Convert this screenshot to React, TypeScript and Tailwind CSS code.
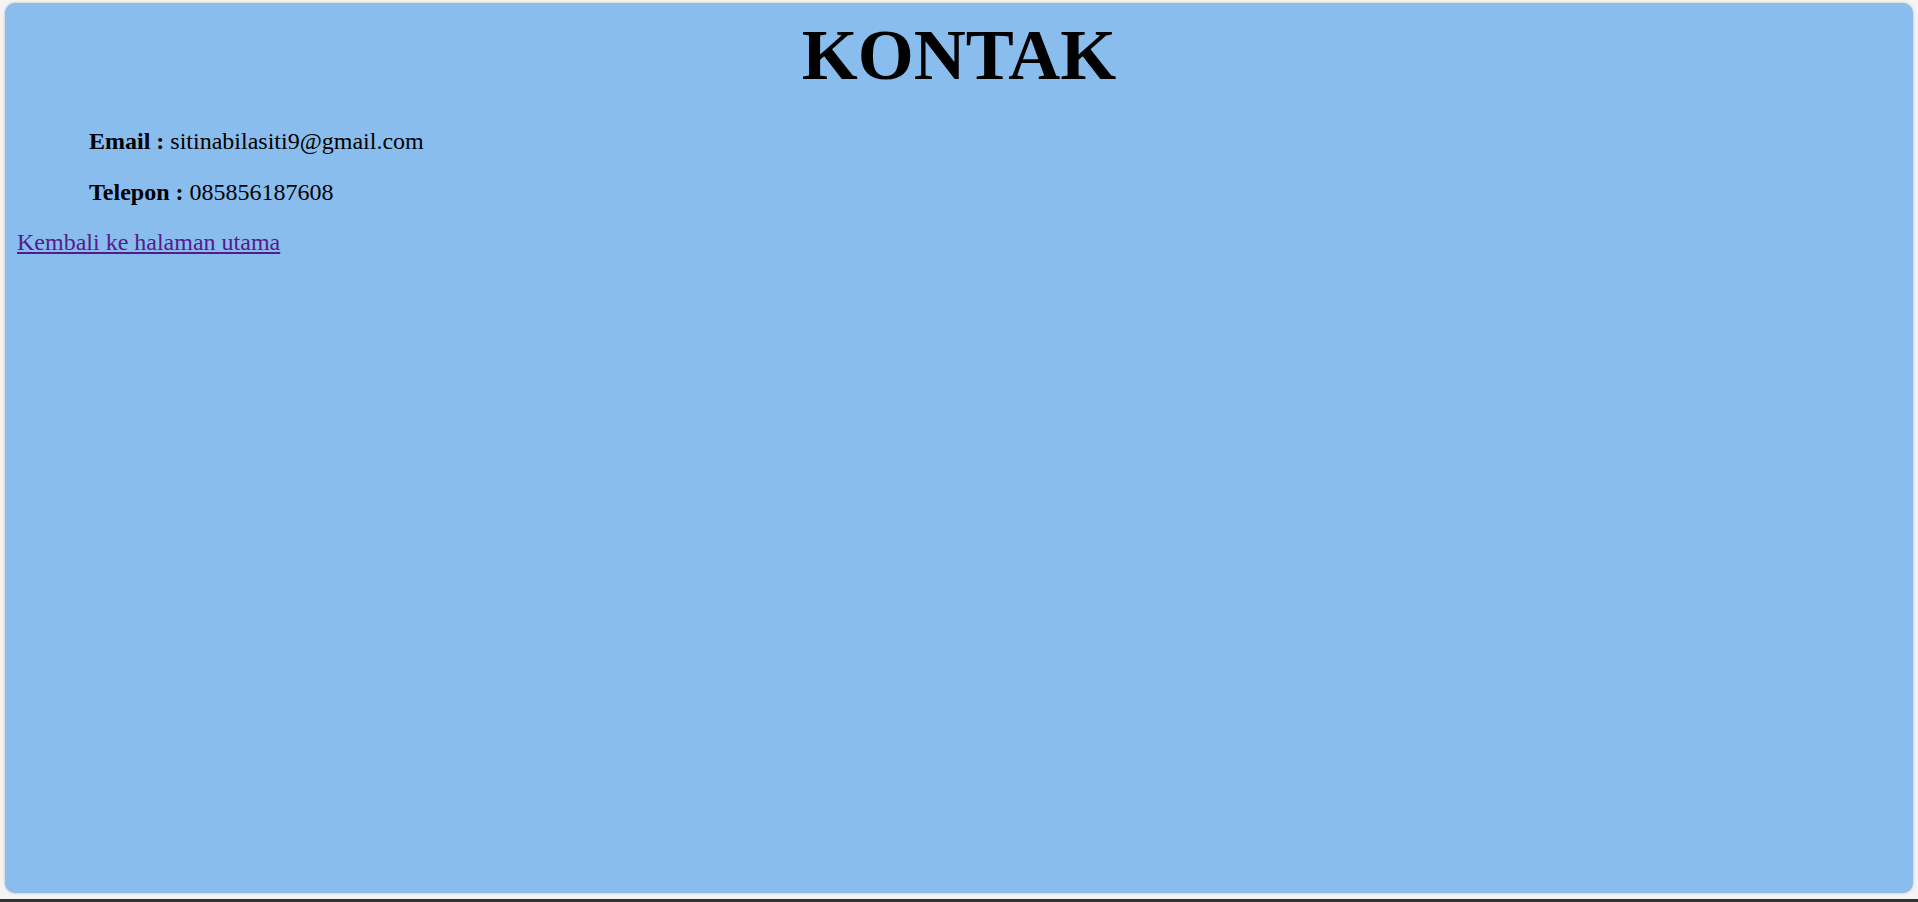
import React from "react";

export default function App() {
  return (
    <div className="h-[902px] w-full flex flex-col bg-[#f4f4f4] font-['Liberation_Serif',serif] text-black">
      <div className="flex-1 px-[5px] pt-[3px] pb-[6px] flex">
        {/* kartu kontak */}
        <div className="flex-1 rounded-[10px] bg-[#88bdee] p-[12px] shadow-[0_0_3px_rgba(0,0,0,0.25)]">
          <h1 className="text-center font-bold text-[72px] leading-[80px]">KONTAK</h1>

          <div className="pl-[72px] mt-[34px] text-[24px] leading-[24px]">
            <p>
              <b>Email :</b> sitinabilasiti9@gmail.com
            </p>
            <p className="mt-[27px]">
              <b>Telepon :</b> 085856187608
            </p>
          </div>

          <a href="#" className="block w-fit mt-[26px] text-[24px] leading-[24px] text-[#551a8b] underline">
            Kembali ke halaman utama
          </a>
        </div>
      </div>
      <div className="h-[3px] bg-[#333333]" />
    </div>
  );
}
